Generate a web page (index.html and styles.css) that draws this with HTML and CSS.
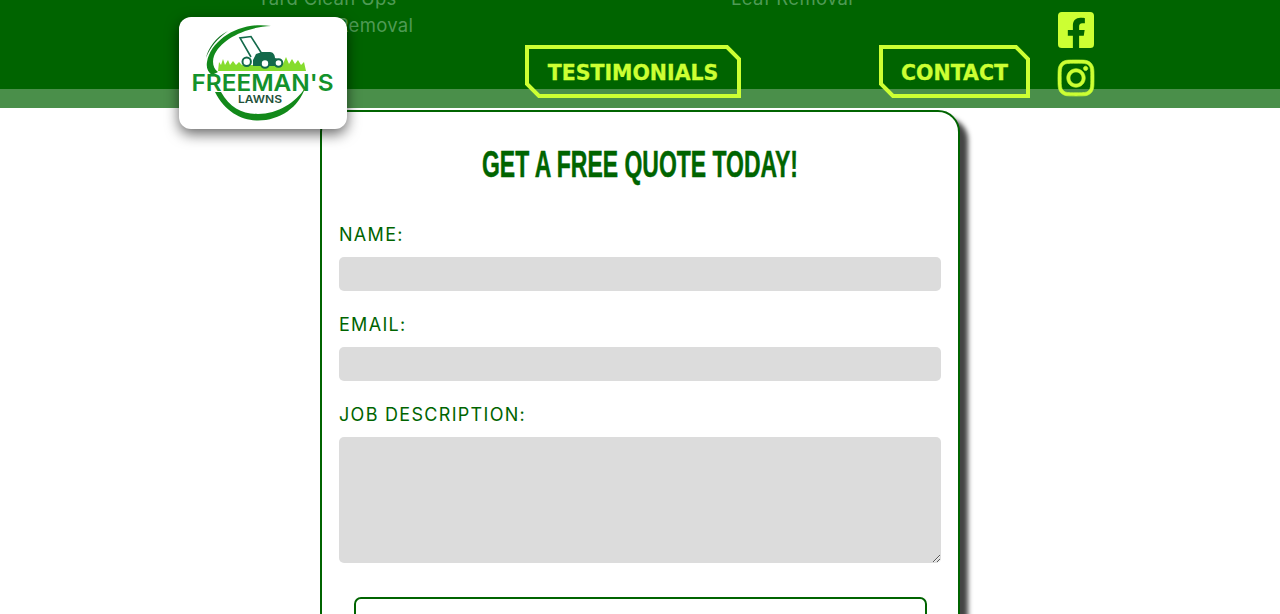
FILE: index.html
```html
<!DOCTYPE html>
<html lang="en">
<head>
<meta charset="utf-8">
<title>Freeman's Lawns - Free Quote</title>
<link rel="stylesheet" href="styles.css">
</head>
<body>
<header class="site-header">
  <ul class="menu menu-services">
    <li>Yard Clean Ups</li>
    <li>Brush Pile Removal</li>
  </ul>
  <ul class="menu menu-seasonal">
    <li>Leaf Removal</li>
  </ul>
  <a class="logo" href="#" aria-label="Freeman's Lawns">
    <svg class="logo-art" viewBox="179 17 168 112" width="168" height="112">
      <path class="swoosh" d="M271 26C241 21 211 39 207 62C206 68 208 72 212 75L218 72C213 68 212 62 214 56C220 40 245 27 271 26Z"/>
      <path class="swoosh-thin" d="M228 31C216 37 208 48 206 58C210 47 218 38 228 31Z"/>
      <path class="swoosh" d="M215 92C225 112 242 120.500 258 120.500C280 120.500 299 107 305 88C296 102 278 114 258 114C242 114 230 108 221 92Z"/>
      <path class="grass" d="M218 71L219 62L221 65L223 59L225 65L228 60L230 65L233 61L236 65L239 62L242 65L272 65L275 60L278 65L281 60L283 64L286 57L289 64L292 59L295 64L298 60L301 65L304 62L306 71Z"/>
      <g class="mower">
        <path class="handle" d="M251 57L240 38L251 36.500L262 54"/>
        <path class="deck" d="M253 60L256 54L262 52L270 52C273 52 275 55 275 58L281 60L281 66L253 66Z"/>
        <circle class="wheel" cx="246.700" cy="61.700" r="4.200"/>
        <circle class="wheel" cx="265" cy="63.500" r="4.200"/>
        <circle class="wheel" cx="278.500" cy="63" r="3.800"/>
      </g>
      <text class="logo-name" x="191.500" y="91" textLength="142" lengthAdjust="spacingAndGlyphs">FREEMAN'S</text>
      <text class="logo-sub" x="238" y="103" textLength="44" lengthAdjust="spacingAndGlyphs">LAWNS</text>
    </svg>
  </a>
  <nav class="main-nav">
    <a class="nav-btn nav-btn-testimonials" href="#">
      <svg class="nav-frame" viewBox="0 0 216 53" aria-hidden="true"><polygon points="2,2 202,2 214,14 214,51 14,51 2,39"/></svg>
      <span class="nav-label">TESTIMONIALS</span>
    </a>
    <a class="nav-btn nav-btn-contact" href="#">
      <svg class="nav-frame" viewBox="0 0 151 53" aria-hidden="true"><polygon points="2,2 137,2 149,14 149,51 14,51 2,39"/></svg>
      <span class="nav-label">CONTACT</span>
    </a>
    <div class="social">
      <a href="#" aria-label="Facebook">
        <svg class="social-icon" viewBox="0 32 448 448"><path d="M400 32H48A48 48 0 0 0 0 80v352a48 48 0 0 0 48 48h137.250V327.690h-63V256h63v-54.640c0-62.150 37-96.480 93.670-96.480 27.140 0 55.520 4.840 55.520 4.840v61h-31.270c-30.810 0-40.420 19.120-40.420 38.730V256h68.780l-11 71.690h-57.780V480H400a48 48 0 0 0 48-48V80a48 48 0 0 0-48-48z"/></svg>
      </a>
      <a href="#" aria-label="Instagram">
        <svg class="social-icon social-icon-bold" viewBox="0 32 448 448"><path d="M224.100 141c-63.600 0-114.900 51.300-114.900 114.900s51.300 114.900 114.900 114.900S339 319.500 339 255.900 287.700 141 224.100 141zm0 189.600c-41.100 0-74.700-33.500-74.700-74.700s33.500-74.700 74.700-74.700 74.700 33.500 74.700 74.700-33.600 74.700-74.700 74.700zm146.400-194.300c0 14.900-12 26.800-26.800 26.800-14.900 0-26.800-12-26.800-26.800s12-26.800 26.800-26.800 26.800 12 26.800 26.800zm76.100 27.200c-1.700-35.900-9.900-67.700-36.200-93.900-26.200-26.200-58-34.400-93.900-36.200-37-2.100-147.900-2.100-184.900 0-35.800 1.700-67.600 9.900-93.900 36.100s-34.400 58-36.200 93.900c-2.100 37-2.100 147.900 0 184.900 1.700 35.900 9.900 67.700 36.200 93.900s58 34.400 93.900 36.200c37 2.100 147.900 2.100 184.900 0 35.900-1.700 67.700-9.900 93.900-36.200 26.200-26.200 34.400-58 36.200-93.900 2.100-37 2.100-147.800 0-184.800zM398.800 388c-7.800 19.600-22.900 34.700-42.600 42.600-29.500 11.700-99.500 9-132.100 9s-102.700 2.600-132.100-9c-19.600-7.800-34.700-22.900-42.600-42.600-11.700-29.500-9-99.500-9-132.100s-2.600-102.700 9-132.100c7.800-19.600 22.900-34.700 42.600-42.600 29.500-11.700 99.500-9 132.100-9s102.700-2.600 132.100 9c19.600 7.800 34.700 22.900 42.600 42.600 11.700 29.500 9 99.500 9 132.100s2.700 102.700-9 132.100z"/></svg>
      </a>
    </div>
  </nav>
</header>
<main class="content">
  <form class="quote-card">
    <h1 class="quote-title">GET A FREE QUOTE TODAY!</h1>
    <label class="field-label" for="name">NAME:</label>
    <input class="field-input" id="name" type="text">
    <label class="field-label" for="email">EMAIL:</label>
    <input class="field-input" id="email" type="email">
    <label class="field-label" for="job">JOB DESCRIPTION:</label>
    <textarea class="field-input field-area" id="job"></textarea>
    <button class="submit-btn" type="submit" aria-label="Submit"></button>
  </form>
</main>
</body>
</html>
```
FILE: styles.css
```css
* { box-sizing: border-box; }
html, body { margin: 0; height: 100%; overflow: hidden; background: #fff; }
body { font-family: "Inter", "Liberation Sans", sans-serif; }

.site-header {
  position: relative;
  height: 108px;
  background: #006400;
  overflow: visible;
}
.site-header::after {
  content: "";
  position: absolute;
  left: 0; right: 0; bottom: 0;
  height: 19px;
  background: #4a8f4a;
}

.menu {
  position: absolute;
  margin: 0;
  padding: 0;
  list-style: none;
  font-size: 18.500px;
  line-height: 27px;
  letter-spacing: .3px;
  color: #4f9a55;
  text-align: center;
  top: -15px;
  white-space: nowrap;
}
.menu-services { left: 238px; width: 178px; }
.menu-seasonal { left: 731px; }

.logo {
  position: absolute;
  left: 179px;
  top: 17px;
  width: 168px;
  height: 112px;
  background: #fff;
  border-radius: 12px;
  box-shadow: 0 5px 14px rgba(0, 0, 0, .6);
  z-index: 3;
}
.logo-art { display: block; }
.swoosh { fill: #12891a; }
.swoosh-thin { fill: #0e6f1c; }
.grass { fill: #86dc2e; }
.handle { fill: none; stroke: #13694a; stroke-width: 1.6; }
.deck { fill: #13694a; }
.wheel { fill: #fff; stroke: #13694a; stroke-width: 2; }
.logo-name { font-family: "Inter", sans-serif; font-weight: 600; font-size: 23.500px; fill: #13922b; }
.logo-sub { font-family: "Inter", sans-serif; font-weight: 600; font-size: 10.500px; fill: #24523a; }

.main-nav {
  position: relative;
  z-index: 2;
  display: flex;
  align-items: flex-end;
  height: 98px;
  padding-left: 525px;
}
.nav-btn {
  position: relative;
  display: flex;
  align-items: center;
  justify-content: center;
  height: 53px;
  padding-top: 3px;
  color: #ccff33;
  text-decoration: none;
  font-family: "DejaVu Sans", sans-serif;
  font-weight: 700;
  font-size: 20.500px;
  -webkit-text-stroke: .3px #ccff33;
}
.nav-btn-testimonials { width: 216px; margin-right: 138px; }
.nav-btn-contact { width: 151px; margin-right: 28px; }
.nav-frame { position: absolute; inset: 0; width: 100%; height: 100%; }
.nav-frame polygon { fill: none; stroke: #ccff33; stroke-width: 4; }
.nav-label { position: relative; }

.social {
  display: flex;
  flex-direction: column;
  gap: 12px;
  margin-bottom: 2px;
}
.social a { display: block; height: 36px; }
.social-icon { display: block; width: 36px; height: 36px; fill: #ccff33; overflow: visible; }
.social-icon-bold { stroke: #ccff33; stroke-width: 8; }

.content { display: flex; justify-content: center; padding-top: 2px; }
.quote-card {
  width: 640px;
  height: 700px;
  padding: 0 17px;
  background: #fff;
  border: 2px solid #006400;
  border-radius: 22px;
  box-shadow: 8px 8px 5px #444;
}
.quote-title {
  margin: 32px 0 37px;
  text-align: center;
  font-family: "Liberation Sans", sans-serif;
  font-weight: 700;
  font-size: 36px;
  line-height: 42px;
  color: #006400;
  -webkit-text-stroke: .5px #006400;
  transform: scaleX(.638);
}
.field-label {
  display: block;
  margin-bottom: 10px;
  font-size: 18px;
  line-height: 24px;
  letter-spacing: 1.3px;
  color: #006400;
}
.field-input {
  display: block;
  width: 602px;
  height: 34px;
  margin-bottom: 22px;
  border: 0;
  border-radius: 5px;
  background: #dcdcdc;
}
.field-area { height: 126px; margin-bottom: 34px; }
.submit-btn {
  display: block;
  width: 573px;
  height: 50px;
  margin: 0 auto;
  background: #fff;
  border: 2px solid #006400;
  border-radius: 7px;
}
```
